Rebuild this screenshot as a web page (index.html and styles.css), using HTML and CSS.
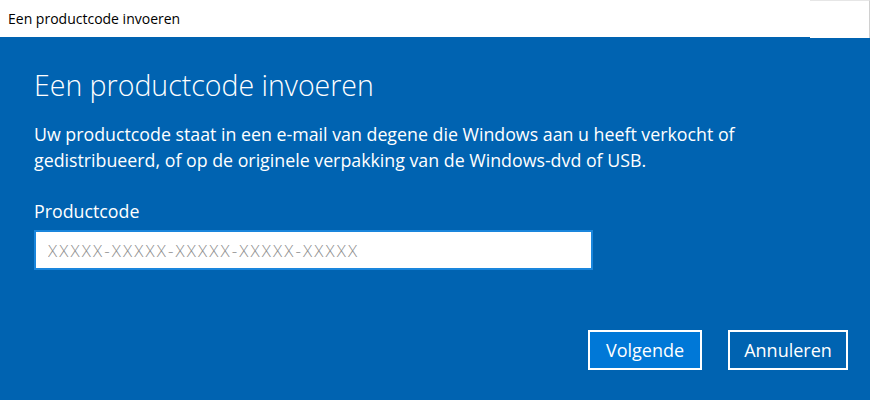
FILE: index.html
```html
<!DOCTYPE html>
<html lang="nl">
<head>
<meta charset="utf-8">
<title>Een productcode invoeren</title>
<link rel="stylesheet" href="styles.css">
</head>
<body>
<div class="window">
  <div class="titlebar">
    <span class="title">Een productcode invoeren</span>
    <span class="caption-btn"></span>
  </div>
  <div class="content">
    <h1 class="heading">Een productcode invoeren</h1>
    <p class="desc">Uw productcode staat in een e-mail van degene die Windows aan u heeft verkocht of<br>gedistribueerd, of op de originele verpakking van de Windows-dvd of USB.</p>
    <label class="label" for="key">Productcode</label>
    <input class="input" id="key" type="text" placeholder="XXXXX-XXXXX-XXXXX-XXXXX-XXXXX">
    <div class="actions">
      <button class="btn btn-primary">Volgende</button>
      <button class="btn">Annuleren</button>
    </div>
  </div>
</div>
</body>
</html>
```
FILE: styles.css
```css
* { box-sizing: border-box; }
html, body { margin: 0; padding: 0; }
body {
  width: 870px;
  height: 400px;
  overflow: hidden;
  font-family: "Open Sans", "Noto Sans", sans-serif;
  background: #0063b1;
}
.window {
  display: flex;
  flex-direction: column;
  height: 400px;
}
.titlebar {
  height: 37px;
  background: #ffffff;
  display: flex;
  align-items: center;
  justify-content: space-between;
  padding-left: 8px;
}
.title {
  font-size: 14px;
  color: #000;
}
.caption-btn {
  width: 60px;
  height: 38px;
  align-self: flex-start;
  border-top: 1px solid #e6e6e6;
  border-right: 1px solid #d0d0d0;
  background: #fff;
}
.content {
  flex: 1;
  display: flex;
  flex-direction: column;
  align-items: flex-start;
  padding: 0 22px 0 34px;
  color: #fff;
}
.heading {
  margin: 28px 0 0;
  font-size: 28.5px;
  font-weight: 300;
  line-height: 40px;
}
.desc {
  margin: 16px 0 0;
  font-size: 17.8px;
  line-height: 26px;
}
.label {
  margin-top: 26px;
  font-size: 17.8px;
  line-height: 24px;
}
.input {
  margin-top: 7px;
  width: 559px;
  height: 40px;
  border: 2px solid #1a86dc;
  background: #fff;
  padding: 0 12px;
  font-family: "Open Sans", sans-serif;
  font-size: 17px;
  font-weight: 300;
  color: #000;
  outline: none;
}
.input::placeholder {
  color: #8f8f8f;
  letter-spacing: 2.1px;
}
.actions {
  margin-top: 60px;
  align-self: flex-end;
  display: flex;
  gap: 26px;
}
.btn {
  height: 40px;
  border: 2px solid #fff;
  background: transparent;
  color: #fff;
  font-family: "Open Sans", sans-serif;
  font-size: 18px;
  padding: 0;
  width: 120px;
}
.btn-primary {
  width: 114px;
  background: #0078d7;
}
```
